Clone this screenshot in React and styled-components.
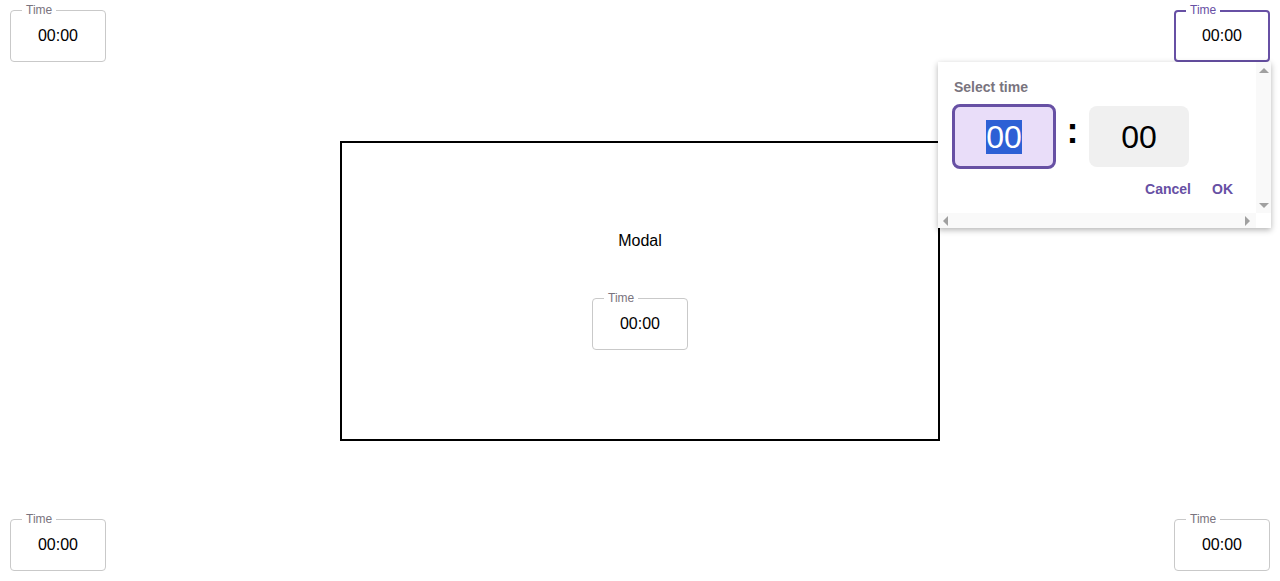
import React from 'react'
import styled, { createGlobalStyle } from 'styled-components'

const purple = '#6750a4'

const GlobalStyle = createGlobalStyle`
  html, body {
    margin: 0;
    padding: 0;
    background: #ffffff;
    font-family: 'Liberation Sans', Arial, sans-serif;
  }
  * {
    box-sizing: border-box;
  }
`

export default function App() {
  return (
    <Page>
      <GlobalStyle />
      <Row>
        <TimeField />
        <Anchor>
          <TimeField focused />
          <Picker />
        </Anchor>
      </Row>
      <Middle>
        <Modal>
          <ModalTitle>Modal</ModalTitle>
          <TimeField />
        </Modal>
      </Middle>
      <Row>
        <TimeField />
        <TimeField />
      </Row>
    </Page>
  )
}

function TimeField({ focused }) {
  return (
    <Field $focused={focused}>
      <Legend $focused={focused}>Time</Legend>
      <Value>00:00</Value>
    </Field>
  )
}

function Picker() {
  return (
    <Popup>
      <PopupBody>
        <PopupLabel>Select time</PopupLabel>
        <Clock>
          <Segment $active>
            <Selected>00</Selected>
          </Segment>
          <Colon>:</Colon>
          <Segment>00</Segment>
        </Clock>
        <Actions>
          <TextButton>Cancel</TextButton>
          <TextButton>OK</TextButton>
        </Actions>
      </PopupBody>
      <VTrack>
        <Arrow $dir="up" />
        <Arrow $dir="down" />
      </VTrack>
      <HTrack>
        <Arrow $dir="left" />
        <Arrow $dir="right" />
      </HTrack>
      <Corner />
    </Popup>
  )
}

const Page = styled.div`
  height: 100vh;
  display: grid;
  grid-template-rows: 52px 1fr 52px;
  padding: 10px 10px 10px;
`

const Row = styled.div`
  display: flex;
  justify-content: space-between;
  align-items: flex-start;
`

const Middle = styled.div`
  display: flex;
  align-items: center;
  justify-content: center;
`

const Modal = styled.div`
  width: 600px;
  height: 300px;
  border: 2px solid #000000;
  display: flex;
  flex-direction: column;
  align-items: center;
  justify-content: center;
  gap: 48px;
`

const ModalTitle = styled.div`
  font-size: 16px;
  line-height: 18px;
  color: #000000;
`

const Anchor = styled.div`
  position: relative;
`

const Field = styled.div`
  position: relative;
  width: 96px;
  height: 52px;
  border: ${p => (p.$focused ? `2px solid ${purple}` : '1px solid #c9c9c9')};
  border-radius: 4px;
  display: flex;
  align-items: center;
  justify-content: center;
  background: #ffffff;
`

const Legend = styled.span`
  position: absolute;
  top: ${p => (p.$focused ? '-9px' : '-8px')};
  left: ${p => (p.$focused ? '10px' : '11px')};
  padding: 0 4px;
  background: #ffffff;
  font-size: 12px;
  line-height: 14px;
  color: ${p => (p.$focused ? purple : '#79747e')};
`

const Value = styled.span`
  font-size: 16px;
  line-height: 18px;
  color: #000000;
`

const Popup = styled.div`
  position: absolute;
  top: 52px;
  right: -1px;
  width: 333px;
  height: 166px;
  display: grid;
  grid-template-columns: 1fr 15px;
  grid-template-rows: 1fr 15px;
  background: #ffffff;
  box-shadow: 0 2px 6px rgba(0, 0, 0, 0.3);
  z-index: 2;
`

const PopupBody = styled.div`
  padding: 16px 15px 0 14px;
  overflow: hidden;
`

const PopupLabel = styled.div`
  font-size: 14px;
  line-height: 18px;
  font-weight: 700;
  color: #79747e;
  padding-left: 2px;
`

const Clock = styled.div`
  display: flex;
  align-items: center;
  margin-top: 8px;
`

const Segment = styled.div`
  width: ${p => (p.$active ? '104px' : '100px')};
  height: ${p => (p.$active ? '65px' : '61px')};
  border-radius: 8px;
  border: ${p => (p.$active ? `3px solid ${purple}` : 'none')};
  background: ${p => (p.$active ? '#e9ddf9' : '#f0f0f0')};
  display: flex;
  align-items: center;
  justify-content: center;
  font-size: 32px;
  line-height: 34px;
  color: #000000;
`

const Selected = styled.span`
  background: #2d60d5;
  color: #ffffff;
`

const Colon = styled.span`
  width: 33px;
  text-align: center;
  font-size: 36px;
  line-height: 40px;
  font-weight: 700;
  color: #000000;
  margin-top: -12px;
`

const Actions = styled.div`
  display: flex;
  justify-content: flex-end;
  gap: 5px;
  margin-top: 10px;
`

const TextButton = styled.button`
  border: none;
  background: transparent;
  padding: 1px 8px;
  font-family: 'Liberation Sans', Arial, sans-serif;
  font-size: 14px;
  line-height: 18px;
  font-weight: 700;
  color: ${purple};
  cursor: pointer;
`

const VTrack = styled.div`
  background: #f9f9f9;
  display: flex;
  flex-direction: column;
  justify-content: space-between;
  align-items: center;
  padding: 6px 0 5px;
`

const HTrack = styled.div`
  background: #f9f9f9;
  display: flex;
  justify-content: space-between;
  align-items: center;
  padding: 0 6px 0 5px;
`

const Corner = styled.div`
  background: #ffffff;
`

const arrowShapes = {
  up: 'border-left: 5px solid transparent; border-right: 5px solid transparent; border-bottom: 5px solid #a0a0a0;',
  down: 'border-left: 5px solid transparent; border-right: 5px solid transparent; border-top: 5px solid #a0a0a0;',
  left: 'border-top: 5px solid transparent; border-bottom: 5px solid transparent; border-right: 5px solid #a0a0a0;',
  right: 'border-top: 5px solid transparent; border-bottom: 5px solid transparent; border-left: 5px solid #a0a0a0;',
}

const Arrow = styled.span`
  width: 0;
  height: 0;
  ${p => arrowShapes[p.$dir]}
`
